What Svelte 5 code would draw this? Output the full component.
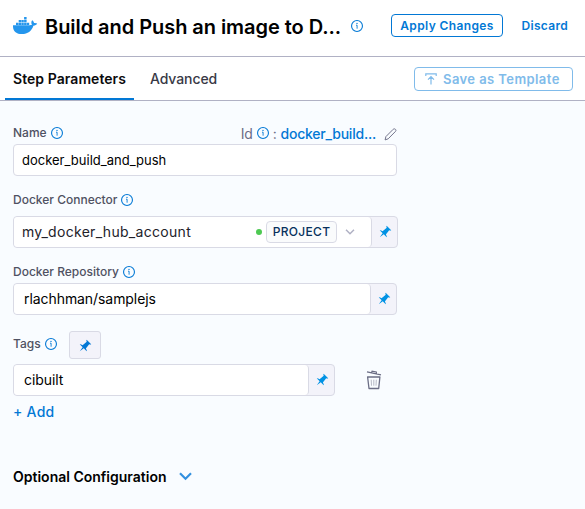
{#snippet info()}
  <svg class="info" width="12" height="12" viewBox="0 0 12 12" fill="none">
    <circle cx="6" cy="6" r="5.45" stroke="#0278d5" stroke-width="1.100" />
    <path d="M5 5.200h1.100v3.500" stroke="#0278d5" stroke-width=".9" />
    <circle cx="6" cy="3.4" r=".7" fill="#0278d5" />
  </svg>
{/snippet}

{#snippet pin()}
  <svg class="pin" width="13" height="13" viewBox="0 0 16 16"><path fill="currentColor" d="M9.41.92c-.51.51-.41 1.5.15 2.56L4.34 7.54C2.8 6.48 1.45 6.05.92 6.58l3.54 3.54-3.54 4.95 4.95-3.54 3.54 3.54c.53-.53.1-1.88-.96-3.42l4.06-5.22c1.06.56 2.04.66 2.55.15L9.41.92z" /></svg>
{/snippet}

<div class="panel">
  <header>
    <svg class="docker" width="25" height="18" viewBox="0 0 25 18" fill="#2496ed">
      <path d="M11.100 0h2.500v2.500h-2.500zM5.700 2.900h2.400v2.400H5.700zM8.400 2.900h2.400v2.400H8.400zM11.100 2.900h2.500v2.400h-2.500zM3 5.700h2.400v2.300H3zM5.700 5.700h2.400v2.300H5.700zM8.400 5.700h2.400v2.300H8.400zM11.100 5.700h2.500v2.300h-2.500zM13.900 5.700h2.300v2.300h-2.300z" />
      <path d="M0 8.300h16.200c1.100 0 2.100-.2 2.700-.8-.9-1.300-.7-3 .3-4.200 1.100.7 1.700 1.600 1.800 2.700 1.200-.2 2.400 0 3.200.6-.7 1.500-2.100 2.100-3.800 2.100C18.600 14 14.800 17 8.900 17 3.300 17-.3 14.300 0 8.300z" />
    </svg>
    <h1>Build and Push an image to D...</h1>
    {@render info()}
    <button class="apply">Apply Changes</button>
    <button class="discard">Discard</button>
  </header>

  <nav>
    <span class="tab active">Step Parameters</span>
    <span class="tab">Advanced</span>
    <button class="save">
      <svg width="12" height="12" viewBox="0 0 12 12" fill="none" stroke="currentColor" stroke-width="1.2">
        <path d="M.8 3V.8h10.400V3M6 11.500V4M3 6.700l3-3 3 3" />
      </svg>
      <span>Save as Template</span>
    </button>
  </nav>

  <main>
    <div class="label name-label">
      <span>Name</span>{@render info()}
      <div class="id">
        <span>Id</span>{@render info()}<span class="colon">:</span><span class="id-value">docker_build...</span>
        <svg class="pencil" width="13" height="13" viewBox="0 0 13 13" fill="none" stroke="#6b6d85" stroke-width=".95">
          <path d="M1.900 8.600 9.200 1.300c.6-.6 1.500-.6 2.200 0s.7 1.500.1 2.100L4.200 10.800 1.100 11.900z" />
        </svg>
      </div>
    </div>
    <div class="field name-field"><span>docker_build_and_push</span></div>

    <div class="label connector-label"><span>Docker Connector</span>{@render info()}</div>
    <div class="field connector-field">
      <div class="value">
        <span class="t-conn">my_docker_hub_account</span>
        <i class="dot"></i>
        <span class="scope">PROJECT</span>
        <svg class="caret" width="10" height="6" viewBox="0 0 10 6" fill="none" stroke="#b0b1c4" stroke-width="1.5"><path d="m1 .8 4 4 4-4" /></svg>
      </div>
      <div class="addon">{@render pin()}</div>
    </div>

    <div class="label repo-label"><span>Docker Repository</span>{@render info()}</div>
    <div class="field repo-field">
      <div class="value wide"><span class="t-repo">rlachhman/samplejs</span></div>
      <div class="addon">{@render pin()}</div>
    </div>

    <div class="label tags-label">
      <span>Tags</span>{@render info()}
      <button class="pin-button">{@render pin()}</button>
    </div>
    <div class="tag-row">
      <div class="field tag-field">
        <div class="value wide"><span class="t-repo">cibuilt</span></div>
        <div class="addon">{@render pin()}</div>
      </div>
      <svg class="trash" width="16" height="20" viewBox="0 0 16 20" fill="none" stroke="#6b6d85">
        <path d="m1 1.900 14 3M5.500 2.700l.6-1.600 4.200.9.200 1.700" stroke-width="1.200" />
        <path d="M1.600 7h12.300l-1.200 11.500H3z" stroke-width="1.300" stroke-linejoin="round" />
        <path d="m5.200 9.700.3 6M7.800 9.700v6m2.500-6-.3 6" stroke-width=".8" opacity=".6" />
      </svg>
    </div>
    <button class="add">+ Add</button>

    <div class="optional">
      <span>Optional Configuration</span>
      <svg width="13" height="9" viewBox="0 0 13 9" fill="none" stroke="#3390df" stroke-width="2.200"><path d="m1 1.300 5.500 5.500L12 1.300" /></svg>
    </div>
  </main>
</div>

<style>
  :global(body) { margin: 0; background: #f9fcff; }
  .panel { width: 585px; height: 509px; overflow: hidden; font-family: Inter, sans-serif; background: #f9fcff; color: #000; }
  .panel * { box-sizing: border-box; }
  svg { display: block; flex: none; }
  span, h1, button { white-space: nowrap; }
  button { font-family: inherit; padding: 0; background: none; border: 0; color: #0278d5; }
  header { height: 57px; display: flex; align-items: center; background: #fff; border-bottom: 1px solid #b0b1c4; padding: 0 17px 4px 13px; }
  h1 { width: 296px; margin: 2px 10px 0 7px; font-size: 20px; font-weight: 600; line-height: 28px; letter-spacing: -.05px; }
  .apply { height: 23px; width: 112px; margin-left: 28px; margin-bottom: 2px; border: 1px solid #0278d5; border-radius: 4px; font-size: 12px; line-height: 21px; font-weight: 600; letter-spacing: .38px; }
  .discard { margin: 0 0 1px auto; font-size: 12px; font-weight: 600; letter-spacing: .3px; }
  nav { height: 44px; display: flex; background: #fff; border-bottom: 1px solid #b0b1c4; padding-left: 5px; padding-right: 12px; }
  .tab { height: 43px; padding: 0 8px; font-size: 14px; font-weight: 500; line-height: 44px; color: #383946; letter-spacing: -.1px; }
  .tab.active { width: 129px; margin-right: 8px; color: #0b0b0d; font-weight: 600; border-bottom: 2px solid #0278d5; letter-spacing: .06px; }
  .save { width: 159px; height: 24px; margin: 10px 0 0 auto; display: flex; align-items: center; gap: 6px; padding-left: 10px; border: 1px solid #80bbea; border-radius: 4px; color: #80bbea; font-size: 13px; font-weight: 600; letter-spacing: .42px; }
  .save span { margin-top: -1px; }
  main { display: flex; flex-direction: column; align-items: flex-start; padding: 24px 0 0 13px; }
  .label { height: 16px; display: flex; align-items: center; font-size: 12px; font-weight: 550; line-height: 16px; color: #4f5162; }
  .label > .info { margin-left: 4px; }
  .name-label { width: 384px; }
  .id { display: flex; align-items: center; margin: 2px 0 0 auto; font-size: 14px; font-weight: 400; color: #6b6d85; letter-spacing: -.2px; }
  .id .info { margin: 0 4px; position: relative; top: -1px; }
  .colon { margin-right: 4px; }
  .id-value { color: #0278d5; font-weight: 550; letter-spacing: -.22px; }
  .pencil { margin-left: 8px; }
  .field { height: 32px; display: flex; align-items: center; border: 1px solid #d9dae5; border-radius: 4px; background: #fff; font-size: 13px; overflow: hidden; }
  .name-field { width: 384px; margin-top: 3px; padding-left: 8px; }
  .connector-label { margin-top: 16px; }
  .connector-field { width: 385px; margin-top: 8px; background: #f3f3fa; color: #22222a; }
  .t-conn { margin-top: -2px; font-size: 14px; letter-spacing: .3px; }
  .t-repo { margin-top: -2px; font-size: 14px; letter-spacing: -.07px; }
  .repo-label { margin-top: 16px; }
  .repo-field { width: 384px; margin-top: 3px; background: #f3f3fa; }
  .tags-label { margin-top: 21px; }
  .value { flex: 1; height: 30px; display: flex; align-items: center; padding-left: 8px; background: #fff; border-right: 1px solid #d9dae5; border-radius: 3px 4px 4px 3px; }
  .value.wide { padding-left: 10px; }
  .addon { width: 25px; height: 30px; padding: 0 0 1px 2px; display: flex; align-items: center; justify-content: center; color: #0092e4; }
  .dot { width: 6px; height: 6px; border-radius: 50%; background: #4dc952; margin-left: auto; }
  .scope { width: 71px; height: 22px; margin-left: 4px; border: 1px solid #d9dae5; border-radius: 4px; background: #fafbfc; font-size: 12px; font-weight: 450; line-height: 20px; text-align: center; color: #07315c; letter-spacing: .3px; }
  .caret { margin: 0 16px 0 8px; }
  .pin-button { width: 32px; height: 28px; margin: 2px 0 0 12px; padding-left: 1px; display: flex; align-items: center; justify-content: center; border: 1px solid #d9dae5; border-radius: 3px; background: #f3f3fa; }
  .tag-row { margin-top: 12px; display: flex; align-items: center; gap: 31px; }
  .tag-field { width: 322px; background: #f3f3fa; }
  .add { margin-top: 7px; height: 18px; font-size: 14px; font-weight: 550; line-height: 18px; letter-spacing: .25px; }
  .optional { margin-top: 45px; height: 20px; display: flex; align-items: center; gap: 12px; font-size: 14px; font-weight: 600; }
</style>
